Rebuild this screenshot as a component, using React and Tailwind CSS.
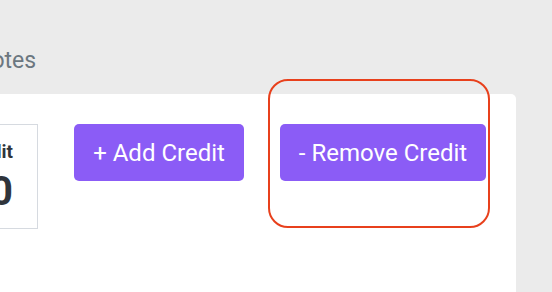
import React from "react";

export default function App() {
  return (
    <div
      className="relative w-[552px] h-[292px] overflow-hidden bg-[#ebebeb]"
      style={{ fontFamily: "Roboto, 'Liberation Sans', sans-serif" }}
    >
      <div className="h-[94px] pt-[47px]">
        <div className="ml-[-25px] text-[23px] leading-[28px] text-[#6b7780]">Notes</div>
      </div>
      <div className="w-[516px] h-[198px] bg-white rounded-tr-[5px] pt-[30px]">
        <div className="flex items-start">
          <div className="ml-[-100px] w-[138px] h-[105px] border border-[#d6dae0] flex flex-col items-end pr-[24px] pt-[15px] text-[#2f343b] font-bold">
            <div className="text-[19px] leading-[24px]">Credit</div>
            <div className="text-[40px] leading-[44px] mt-[6px]">0</div>
          </div>
          <button className="ml-[36px] w-[170px] h-[57px] rounded-[5px] bg-[#8b5cf6] text-white text-[24px] flex items-center justify-center">
            + Add Credit
          </button>
          <button className="ml-[36px] w-[206px] h-[57px] rounded-[5px] bg-[#8b5cf6] text-white text-[24px] flex items-center justify-center">
            - Remove Credit
          </button>
        </div>
      </div>
      <div className="absolute left-[268px] top-[79px] w-[222px] h-[149px] border-2 border-[#e8401c] rounded-[20px]"></div>
    </div>
  );
}
